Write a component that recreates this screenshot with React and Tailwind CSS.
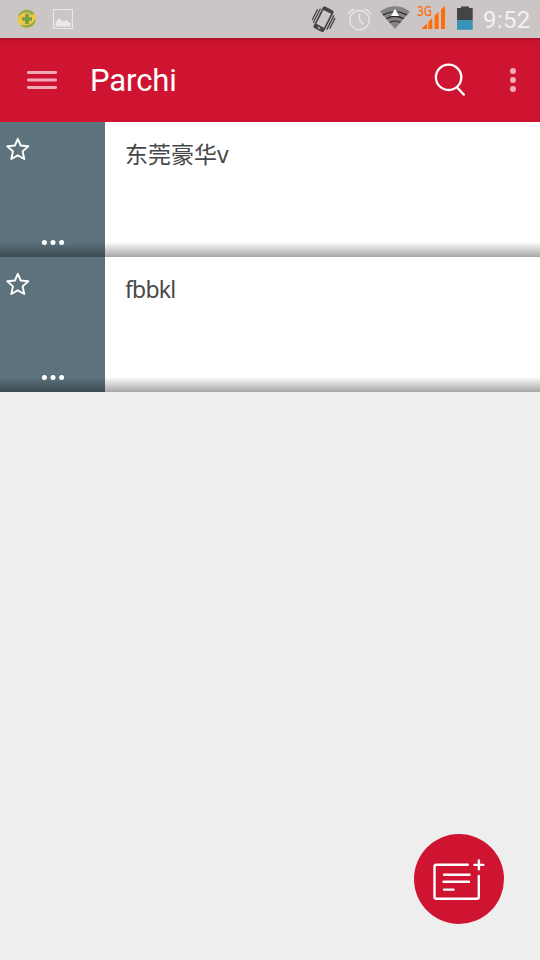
const notes = [
  { id: 1, title: "东莞豪华v", spacing: "tracking-normal" },
  { id: 2, title: "fbbkl", spacing: "tracking-[-0.8px]" },
];

function AppBadge() {
  return (
    <svg className="ml-[17px] size-5 shrink-0" viewBox="0 0 20 20">
      <circle cx="10" cy="10" r="9.300" fill="#f0c645" />
      <path d="M1.500 6C5-.5 14-1 17.500 5L14.500 6C10 2 5 3 1.500 8Z" fill="#8eac50" />
      <path d="M3 16C8 21 17 19 19 11L18 11C15 16 9 17 3 16Z" fill="#86ac50" />
      <path d="M8.200 5h3.600v3.200H15v3.600h-3.200V15H8.200v-3.200H5V8.200h3.200z" fill="#759f43" />
    </svg>
  );
}

function PictureIcon() {
  return (
    <svg className="ml-4 h-5 w-5 shrink-0" viewBox="0 0 20 20">
      <path d="M.5.5h19v19H.5z" fill="none" stroke="#ebe8e8" strokeWidth="1.200" />
      <path d="M2.500 17.500v-4L4 11.500l2.500-2.500 2 2.500 2 1 3-1.500 2 1.500 2 2v3z" fill="#ebe8e8" />
    </svg>
  );
}

function VibrateIcon() {
  return (
    <svg className="h-[38px] w-[30px] shrink-0" viewBox="308 0 30 38">
      <g transform="rotate(27 323.500 19.300)" fill="none" stroke="#444">
        <rect x="317.500" y="7.200" width="12" height="24.200" rx="2.200" fill="#444" stroke="none" />
        <path d="M319.200 11h8.600v15.600h-8.600z" fill="#cbc5c5" stroke="none" />
        <path d="M315.900 11v16M313.700 13v12M331.100 11v16M333.300 13v12" strokeWidth="1.300" />
        <path d="M322.200 29h2.600" stroke="#cbc5c5" strokeWidth="1.200" />
      </g>
    </svg>
  );
}

function AlarmIcon() {
  return (
    <svg className="h-[38px] w-[42px] shrink-0" viewBox="338 0 42 38" fill="none" stroke="#e6e3e3" strokeWidth="1.500">
      <circle cx="359.500" cy="20.200" r="9.700" />
      <path d="M359.500 13.500V20l4 4.500M348.200 14.500Q350 10.500 354 9.200M371 14.500Q369 10.500 365 9.200" />
    </svg>
  );
}

function WifiIcon() {
  return (
    <svg className="h-[38px] w-[34px] shrink-0" viewBox="380 0 34 38">
      <path d="M380 11.500Q395 .8 410 11.500L395 29Z" fill="#858282" />
      <g fill="none" stroke="#242424" strokeWidth="1.200">
        <path d="M383 15Q395 8.500 407 15M386.300 18.800Q395 14 403.700 18.800M389.500 22.500Q395 19.500 400.500 22.500" />
      </g>
      <path d="M395 8.800l4 7.200h-8z" fill="#fff" />
    </svg>
  );
}

function SignalIcon() {
  return (
    <svg className="h-[38px] w-[36px] shrink-0" viewBox="414 0 36 38" fill="#ff6d0a">
      <path d="M421.300 29l5.700-5.500V29zM428.300 29v-7l4-4v11zM434.600 29V15.500l4-3.500v17zM441 29V9.500l4-3.500v23z" />
      <text x="417.200" y="15.900" fontFamily="'Noto Sans', sans-serif" fontSize="13.500" fontWeight="500" textLength="15" lengthAdjust="spacingAndGlyphs">3G</text>
    </svg>
  );
}

function BatteryIcon() {
  return (
    <svg className="h-[38px] w-[33px] shrink-0" viewBox="450 0 33 38">
      <path d="M457 8h4V6.500h8V8h3.700v12.500H457z" fill="#444" />
      <path d="M457 20.300h15.700v9.500H457z" fill="#3693b7" />
    </svg>
  );
}

function StatusBar() {
  return (
    <div className="flex h-[38px] items-center bg-[#cbc5c5]">
      <AppBadge />
      <PictureIcon />
      <div className="ml-auto flex items-center">
        <VibrateIcon />
        <AlarmIcon />
        <WifiIcon />
        <SignalIcon />
        <BatteryIcon />
        <span className="w-[57px] pt-0.5 font-[Roboto,sans-serif] text-[24px] leading-[36px] tracking-[0.3px] text-[#f3f1f1]">9:52</span>
      </div>
    </div>
  );
}

function Toolbar() {
  return (
    <header className="flex h-[84px] items-center bg-[#cf1431] bg-linear-to-b from-[#a90e28] from-0% via-[#c8122e] via-[3px] to-[#cf1431] to-[12px]">
      <button aria-label="Menu" className="ml-[26px]">
        <svg className="h-6 w-8" viewBox="0 0 32 24" fill="none" stroke="#f1a9b5" strokeLinecap="round" strokeWidth="2.800">
          <path d="M2.300 4.500h27.400M2.300 12h27.400M2.300 19.500h27.400" />
        </svg>
      </button>
      <h1 className="ml-8 pt-0.5 font-[Roboto,sans-serif] text-[31px] leading-10 tracking-[-0.1px] text-white">Parchi</h1>
      <button aria-label="Search" className="ml-auto">
        <svg className="size-9" viewBox="432 62 36 36" fill="none" stroke="#fff" strokeWidth="2.300" strokeLinecap="round">
          <circle cx="448.600" cy="77.300" r="12.700" />
          <path d="M456.900 87.300l6.900 7.300" />
        </svg>
      </button>
      <button aria-label="More" className="mr-6 ml-[42px] flex w-1.5 flex-col gap-[3px]">
        <span className="size-1.5 rounded-full bg-[#f3acb8]" />
        <span className="size-1.5 rounded-full bg-[#f3acb8]" />
        <span className="size-1.5 rounded-full bg-[#f3acb8]" />
      </button>
    </header>
  );
}

function NoteRow({ title, spacing }) {
  return (
    <li className="relative flex h-[135px] bg-white">
      <div className="flex w-[105px] flex-col justify-between bg-[#5c737d]">
        <svg className="mt-3.5 ml-1 size-7" viewBox="0 0 28 28" fill="none" stroke="#fff" strokeWidth="1.900" strokeLinejoin="round">
          <path d="M13.800 2.800l2.900 6.700 7.600.8-5.700 5.100 1.700 7.600-6.500-3.600-6.500 3.600 1.700-7.600-5.700-5.100 7.600-.8z" />
        </svg>
        <svg className="relative z-10 mb-3 ml-[41px] h-[5px] w-6" viewBox="0 0 24 5" fill="#fff">
          <circle cx="3.400" cy="2.500" r="2.500" />
          <circle cx="12" cy="2.500" r="2.500" />
          <circle cx="20.600" cy="2.500" r="2.500" />
        </svg>
      </div>
      <h2 className={`pt-4 pl-5 font-['Noto_Sans','Noto_Sans_CJK_SC',sans-serif] text-[23px] leading-8 text-[#484848] ${spacing}`}>{title}</h2>
      <div className="absolute inset-x-0 bottom-0 h-[15px] bg-linear-to-b from-transparent to-black/35" />
    </li>
  );
}

function ComposeButton() {
  return (
    <button aria-label="New note" className="mt-auto mr-9 mb-9 size-[90px] self-end rounded-full bg-[#cf1431]">
      <svg className="size-[90px]" viewBox="414 834 90 90" fill="none" stroke="#fff" strokeWidth="2.400" strokeLinecap="round" strokeLinejoin="round">
        <path d="M467.800 864.800h-31.300q-2 0-2 2v30q0 2 2 2h40.300q2 0 2-2V876" />
        <path d="M444 874.800h25.500M443.500 881.700h25.500M444 889.600h9.500M474.500 864.900h8.800M478.900 860.500v8.800" />
      </svg>
    </button>
  );
}

export default function App() {
  return (
    <main className="flex h-[960px] w-[540px] flex-col overflow-hidden bg-[#eee]">
      <StatusBar />
      <Toolbar />
      <ul>
        {notes.map((note) => (
          <NoteRow key={note.id} title={note.title} spacing={note.spacing} />
        ))}
      </ul>
      <ComposeButton />
    </main>
  );
}
